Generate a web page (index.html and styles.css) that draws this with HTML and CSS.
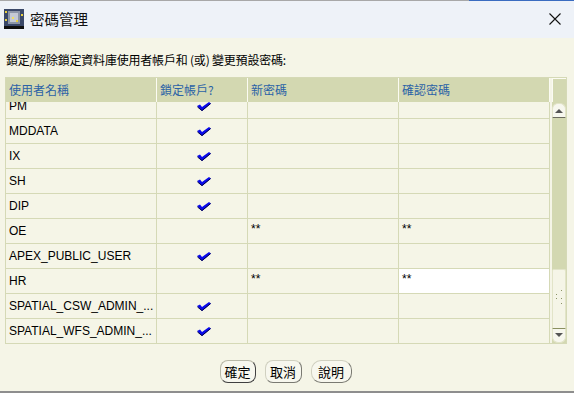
FILE: index.html
```html
<!DOCTYPE html>
<html>
<head>
<meta charset="UTF-8">
<title>密碼管理</title>
<link rel="stylesheet" href="styles.css">
</head>
<body>

<div class="window">
	<div class="titlebar">
		<svg class="app-icon" width="20" height="20" viewBox="0 0 20 20">
			<rect x="0" y="0" width="20" height="17" fill="#3a4868"/>
			<rect x="4" y="2" width="12" height="13" fill="#8c96a8"/>
			<rect x="6" y="4" width="8" height="9" fill="#c4cad4"/>
			<rect x="1" y="2" width="2" height="2" fill="#e8d040"/>
			<rect x="17" y="5" width="2" height="2" fill="#e8d040"/>
			<rect x="8" y="8" width="2" height="2" fill="#f0e060"/>
			<rect x="12" y="11" width="2" height="2" fill="#e8d040"/>
			<rect x="1" y="10" width="2" height="2" fill="#e8d040"/>
			<rect x="0" y="17" width="20" height="3" fill="#101010"/>
		</svg>
		<span class="title">密碼管理</span>
		<svg class="close" width="12" height="12" viewBox="0 0 12 12">
			<path d="M0.5 0.5 L11.5 11.5 M11.5 0.5 L0.5 11.5" stroke="#111" stroke-width="1.1" fill="none"/>
		</svg>
	</div>

	<div class="content">
		<p class="intro">鎖定/解除鎖定資料庫使用者帳戶和 (或) 變更預設密碼:</p>

		<div class="grid">
			<div class="grid-main">
				<div class="row grid-head">
					<div class="cell">使用者名稱</div>
					<div class="cell">鎖定帳戶?</div>
					<div class="cell">新密碼</div>
					<div class="cell">確認密碼</div>
				</div>
				<div class="grid-body">
					<div class="row scrolled">
						<div class="cell">PM</div>
						<div class="cell check"><svg class="tick" width="14" height="9" viewBox="0 0 14 9"><polygon points="0,4 3,2.5 5,5 12,0 14,1.5 5,9" fill="#0a0aea"/><polyline points="0.5,5 5,8.6 13.6,1.6" stroke="#000048" stroke-width="1" fill="none"/></svg></div>
						<div class="cell"></div>
						<div class="cell"></div>
					</div>
					<div class="row">
						<div class="cell">MDDATA</div>
						<div class="cell check"><svg class="tick" width="14" height="9" viewBox="0 0 14 9"><polygon points="0,4 3,2.5 5,5 12,0 14,1.5 5,9" fill="#0a0aea"/><polyline points="0.5,5 5,8.6 13.6,1.6" stroke="#000048" stroke-width="1" fill="none"/></svg></div>
						<div class="cell"></div>
						<div class="cell"></div>
					</div>
					<div class="row">
						<div class="cell">IX</div>
						<div class="cell check"><svg class="tick" width="14" height="9" viewBox="0 0 14 9"><polygon points="0,4 3,2.5 5,5 12,0 14,1.5 5,9" fill="#0a0aea"/><polyline points="0.5,5 5,8.6 13.6,1.6" stroke="#000048" stroke-width="1" fill="none"/></svg></div>
						<div class="cell"></div>
						<div class="cell"></div>
					</div>
					<div class="row">
						<div class="cell">SH</div>
						<div class="cell check"><svg class="tick" width="14" height="9" viewBox="0 0 14 9"><polygon points="0,4 3,2.5 5,5 12,0 14,1.5 5,9" fill="#0a0aea"/><polyline points="0.5,5 5,8.6 13.6,1.6" stroke="#000048" stroke-width="1" fill="none"/></svg></div>
						<div class="cell"></div>
						<div class="cell"></div>
					</div>
					<div class="row">
						<div class="cell">DIP</div>
						<div class="cell check"><svg class="tick" width="14" height="9" viewBox="0 0 14 9"><polygon points="0,4 3,2.5 5,5 12,0 14,1.5 5,9" fill="#0a0aea"/><polyline points="0.5,5 5,8.6 13.6,1.6" stroke="#000048" stroke-width="1" fill="none"/></svg></div>
						<div class="cell"></div>
						<div class="cell"></div>
					</div>
					<div class="row">
						<div class="cell">OE</div>
						<div class="cell check"></div>
						<div class="cell stars">**</div>
						<div class="cell stars">**</div>
					</div>
					<div class="row">
						<div class="cell">APEX_PUBLIC_USER</div>
						<div class="cell check"><svg class="tick" width="14" height="9" viewBox="0 0 14 9"><polygon points="0,4 3,2.5 5,5 12,0 14,1.5 5,9" fill="#0a0aea"/><polyline points="0.5,5 5,8.6 13.6,1.6" stroke="#000048" stroke-width="1" fill="none"/></svg></div>
						<div class="cell"></div>
						<div class="cell"></div>
					</div>
					<div class="row">
						<div class="cell">HR</div>
						<div class="cell check"></div>
						<div class="cell stars">**</div>
						<div class="cell stars editing">**</div>
					</div>
					<div class="row">
						<div class="cell">SPATIAL_CSW_ADMIN_...</div>
						<div class="cell check"><svg class="tick" width="14" height="9" viewBox="0 0 14 9"><polygon points="0,4 3,2.5 5,5 12,0 14,1.5 5,9" fill="#0a0aea"/><polyline points="0.5,5 5,8.6 13.6,1.6" stroke="#000048" stroke-width="1" fill="none"/></svg></div>
						<div class="cell"></div>
						<div class="cell"></div>
					</div>
					<div class="row">
						<div class="cell">SPATIAL_WFS_ADMIN_...</div>
						<div class="cell check"><svg class="tick" width="14" height="9" viewBox="0 0 14 9"><polygon points="0,4 3,2.5 5,5 12,0 14,1.5 5,9" fill="#0a0aea"/><polyline points="0.5,5 5,8.6 13.6,1.6" stroke="#000048" stroke-width="1" fill="none"/></svg></div>
						<div class="cell"></div>
						<div class="cell"></div>
					</div>
				</div>
			</div>

			<div class="scrollbar">
				<div class="sb-corner"></div>
				<div class="sb-track">
					<div class="sb-up"></div>
					<div class="sb-space"></div>
					<div class="sb-thumb">
						<svg width="12" height="24" viewBox="0 0 12 24">
							<path d="M3 8 L4 7 M8 4 L9 3 M3 12 L4 11 M8 12 L9 11 M8 17 L9 16" stroke="#8c9466" stroke-width="1" fill="none"/>
						</svg>
					</div>
					<div class="sb-down"></div>
				</div>
			</div>
		</div>

		<div class="buttons">
			<button type="button" class="btn btn-default btn-ok">確定</button>
			<button type="button" class="btn btn-cancel">取消</button>
			<button type="button" class="btn btn-help">說明</button>
		</div>
	</div>
</div>

</body>
</html>
```

FILE: styles.css
```css
html, body {
	margin: 0;
	padding: 0;
}

body {
	width: 574px;
	height: 393px;
	overflow: hidden;
	background: #f5f5e7;
	font-family: "Liberation Sans", "Noto Sans CJK TC", sans-serif;
	font-size: 12px;
	color: #000;
}

.window {
	height: 391px;
	border-bottom: 2px solid #8e8e8e;
}

/* title bar */

.titlebar {
	display: flex;
	align-items: center;
	height: 38px;
	padding: 0 13px 0 4px;
	background-color: #eef2f8;
	background-image: linear-gradient(to right, #a8a8a8 469px, #3a6cc0 469px);
	background-size: 100% 1px;
	background-repeat: no-repeat;
}

.app-icon {
	display: block;
	flex: none;
}

.title {
	flex: 1;
	margin-left: 6px;
	font-family: "Noto Sans CJK TC", sans-serif;
	font-size: 14.5px;
	line-height: 20px;
	color: #111;
}

.close {
	display: block;
	flex: none;
}

/* content */

.content {
	padding: 0 0 0 5px;
}

.intro {
	margin: 14px 0 9px 1px;
	line-height: 16px;
	font-family: "Noto Sans CJK TC", sans-serif;
	font-size: 12px;
	letter-spacing: -0.2px;
}

/* grid */

.grid {
	display: flex;
	width: 560px;
	border: 1px solid #d5d9b6;
}

.grid-main {
	width: 544px;
}

.row {
	display: grid;
	grid-template-columns: 151px 91px 151px 151px;
	box-sizing: border-box;
	height: 25px;
	border-bottom: 1px solid #d5d9b6;
}

.cell {
	box-sizing: border-box;
	padding-left: 3px;
	line-height: 24px;
	white-space: nowrap;
	overflow: hidden;
	border-right: 1px solid #d5d9b6;
}

.grid-head {
	height: 24px;
	border-bottom: none;
	background: #d3d8b1;
}

.grid-head .cell {
	border-right-color: #fbfbf2;
	font-family: "Noto Sans CJK TC", sans-serif;
	color: #2b62a6;
	line-height: 23px;
}

.grid-body {
	height: 241px;
	overflow: hidden;
}

.row.scrolled {
	margin-top: -8px;
}

.check {
	display: flex;
	align-items: center;
	justify-content: center;
	padding-left: 4px;
	padding-top: 1px;
}

.tick {
	display: block;
}

.stars {
	line-height: 20px;
}

.editing {
	background: #fff;
}

/* scrollbar */

.scrollbar {
	width: 14px;
	margin-left: 2px;
	display: flex;
	flex-direction: column;
}

.sb-corner {
	box-sizing: border-box;
	height: 24px;
	background: #d3d8b1;
	border-top: 1px solid #fbfbf2;
	border-left: 1px solid #fbfbf2;
}

.sb-track {
	height: 241px;
	display: flex;
	flex-direction: column;
	background: #d3d8b1;
}

.sb-up,
.sb-down {
	position: relative;
	box-sizing: border-box;
	height: 15px;
	background: #f7f7ee;
	border: 1px solid #e2e4c8;
}

.sb-up {
	margin-top: 1px;
	border-radius: 6px 6px 0 0;
	border-bottom: 1px solid #6b6b5e;
}

.sb-down {
	border-radius: 0 0 6px 6px;
	border-top: 1px solid #8a9060;
}

.sb-up::after,
.sb-down::after {
	content: "";
	position: absolute;
	left: 2px;
	border-left: 4px solid transparent;
	border-right: 4px solid transparent;
}

.sb-up::after {
	top: 5px;
	border-bottom: 4px solid #555;
}

.sb-down::after {
	top: 4px;
	border-top: 4px solid #555;
}

.sb-space {
	flex: 1;
}

.sb-thumb {
	box-sizing: border-box;
	height: 59px;
	display: flex;
	align-items: center;
	justify-content: center;
	background: #f5f5e7;
	border: 1px solid #e2e4c8;
	border-bottom: none;
	border-radius: 2px 2px 0 0;
}

.sb-thumb svg {
	display: block;
}

/* buttons */

.buttons {
	display: flex;
	justify-content: center;
	gap: 9px;
	margin-top: 16px;
	padding-right: 8px;
}

.btn {
	box-sizing: border-box;
	height: 23px;
	padding: 0;
	background: #f7f7ee;
	border: 1px solid;
	border-color: #d0d0c0 #7a7a72 #7a7a72 #d0d0c0;
	border-radius: 8px;
	font-family: "Noto Sans CJK TC", sans-serif;
	font-size: 13px;
	color: #000;
}

.btn-default {
	border-color: #b8b8a8 #404040 #404040 #b8b8a8;
}

.btn-ok {
	width: 36px;
}

.btn-cancel {
	width: 37px;
}

.btn-help {
	width: 41px;
	border-radius: 10px;
}
```
